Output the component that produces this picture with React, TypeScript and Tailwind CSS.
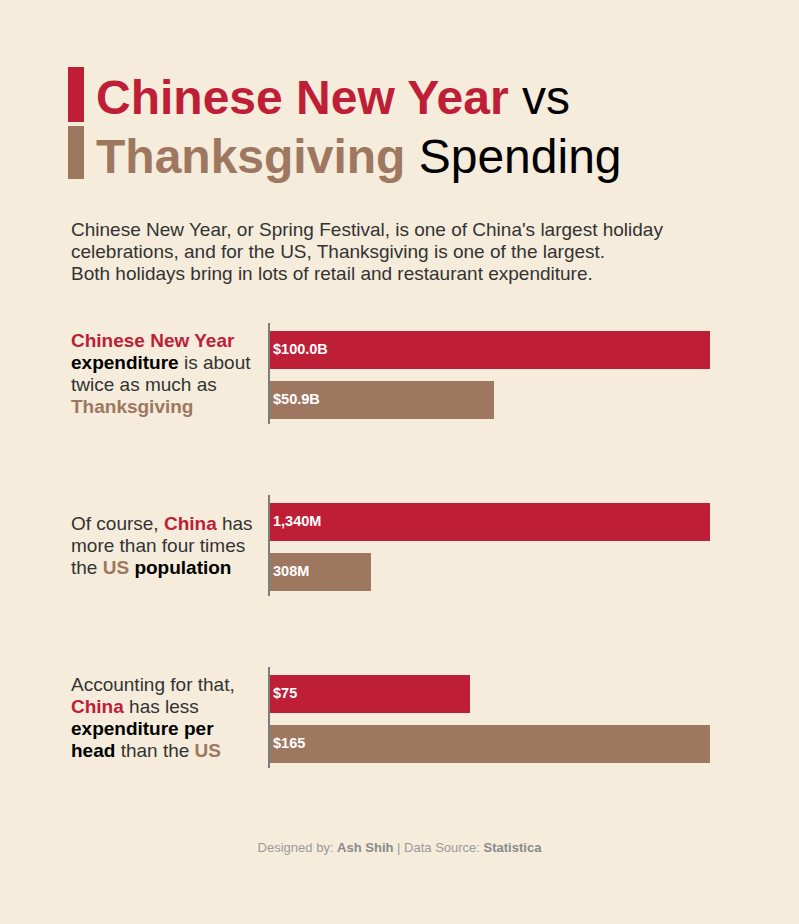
import React from 'react';

const RED = 'text-[#be1e36]';
const BROWN = 'text-[#9e7760]';

interface Bar {
  label: string;
  value: number;
  color: 'red' | 'brown';
}

interface Section {
  text: React.ReactNode;
  bars: Bar[];
  max: number;
}

const sections: Section[] = [
  {
    text: (
      <>
        <span className={`font-bold ${RED}`}>Chinese New Year</span>
        <br />
        <span className="font-bold text-black">expenditure</span> is about
        <br />
        twice as much as
        <br />
        <span className={`font-bold ${BROWN}`}>Thanksgiving</span>
      </>
    ),
    bars: [
      { label: '$100.0B', value: 100, color: 'red' },
      { label: '$50.9B', value: 50.9, color: 'brown' },
    ],
    max: 100,
  },
  {
    text: (
      <>
        Of course, <span className={`font-bold ${RED}`}>China</span> has
        <br />
        more than four times
        <br />
        the <span className={`font-bold ${BROWN}`}>US</span>{' '}
        <span className="font-bold text-black">population</span>
      </>
    ),
    bars: [
      { label: '1,340M', value: 1340, color: 'red' },
      { label: '308M', value: 308, color: 'brown' },
    ],
    max: 1340,
  },
  {
    text: (
      <>
        Accounting for that,
        <br />
        <span className={`font-bold ${RED}`}>China</span> has less
        <br />
        <span className="font-bold text-black">expenditure per</span>
        <br />
        <span className="font-bold text-black">head</span> than the{' '}
        <span className={`font-bold ${BROWN}`}>US</span>
      </>
    ),
    bars: [
      { label: '$75', value: 75, color: 'red' },
      { label: '$165', value: 165, color: 'brown' },
    ],
    max: 165,
  },
];

const CHART_WIDTH = 440;

const App: React.FC = () => {
  return (
    <div
      className="min-h-[924px] w-full bg-[#f5ecdc] pl-[68px] pt-[67px]"
      style={{ fontFamily: '"Liberation Sans", Arial, sans-serif' }}
    >
      {/* Title */}
      <div className="flex flex-col gap-[4px]">
        <div className="flex h-[55px] items-start gap-[12px]">
          <div className="h-[55px] w-[16px] bg-[#be1e36]" />
          <div className="whitespace-nowrap text-[48px] leading-[61px] text-black">
            <span className={`font-bold ${RED}`}>Chinese New Year</span> vs
          </div>
        </div>
        <div className="flex h-[53px] items-start gap-[12px]">
          <div className="h-[53px] w-[16px] bg-[#9e7760]" />
          <div className="whitespace-nowrap text-[48px] leading-[61px] text-black">
            <span className={`font-bold ${BROWN}`}>Thanksgiving</span> Spending
          </div>
        </div>
      </div>

      {/* Intro */}
      <p className="ml-[3px] mt-[40px] text-[19px] leading-[22px] text-[#333333]">
        Chinese New Year, or Spring Festival, is one of China's largest holiday
        <br />
        celebrations, and for the US, Thanksgiving is one of the largest.
        <br />
        Both holidays bring in lots of retail and restaurant expenditure.
      </p>

      {/* Comparisons */}
      <div className="mt-[38px] flex flex-col gap-[71px]">
        {sections.map((section, i) => (
          <div key={i} className="flex items-center">
            <div className="ml-[3px] w-[197px] whitespace-nowrap text-[19px] leading-[22px] text-[#333333]">
              {section.text}
            </div>
            <div className="flex h-[101px] w-[442px] flex-col gap-[12px] border-l-2 border-[#7d7d7d] pt-[8px]">
              {section.bars.map((bar) => (
                <div
                  key={bar.label}
                  className={`flex h-[38px] items-center pl-[3px] text-[14.5px] font-bold text-white ${
                    bar.color === 'red' ? 'bg-[#be1e36]' : 'bg-[#9e7760]'
                  }`}
                  style={{ width: `${(bar.value / section.max) * CHART_WIDTH}px` }}
                >
                  {bar.label}
                </div>
              ))}
            </div>
          </div>
        ))}
      </div>

      {/* Footer */}
      <div className="-ml-[68px] mt-[72px] text-center text-[13px] leading-[16px] text-[#9a9a9a]">
        Designed by: <span className="font-bold text-[#8a8a8a]">Ash Shih</span> | Data Source:{' '}
        <span className="font-bold text-[#8a8a8a]">Statistica</span>
      </div>
    </div>
  );
};

export default App;
